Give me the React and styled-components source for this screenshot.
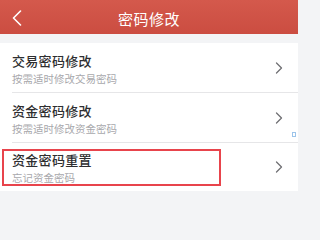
import React from "react";
import styled, { createGlobalStyle } from "styled-components";

const Global = createGlobalStyle`
  html, body { margin: 0; padding: 0; background: #f3f4f6; }
  body { font-family: "Noto Sans CJK SC", "Noto Sans", sans-serif; }
`;

const Page = styled.div`
  width: 298px;
  height: 210px;
  background: #f3f4f6;
  overflow: hidden;
`;

const Header = styled.div`
  height: 34px;
  background: linear-gradient(#d4594c, #cb4d41);
  display: grid;
  grid-template-columns: 40px 1fr 40px;
  align-items: center;
`;

const BackButton = styled.div`
  display: flex;
  align-items: center;
  padding-left: 12px;
  height: 100%;
`;

const Title = styled.div`
  text-align: center;
  color: #fff;
  font-size: 15px;
  letter-spacing: 0.5px;
  line-height: 34px;
  padding-top: 2px;
`;

const List = styled.div`
  margin-top: 9px;
  background: #fff;
`;

const Row = styled.div`
  position: relative;
  height: ${(p) => p.$h}px;
  padding-left: 12px;
  display: flex;
`;

const RowInner = styled.div`
  flex: 1;
  display: flex;
  align-items: center;
  border-bottom: ${(p) => (p.$last ? "none" : "1px solid #e6e6e8")};
  padding-right: 15px;
`;

const Texts = styled.div`
  flex: 1;
  display: flex;
  flex-direction: column;
  padding-top: 3px;
`;

const ItemTitle = styled.div`
  font-size: 13px;
  line-height: 16px;
  color: #2e2e30;
  font-weight: 500;
  letter-spacing: 0.3px;
`;

const ItemSub = styled.div`
  font-size: 10.5px;
  line-height: 14px;
  margin-top: 3px;
  color: #a8a8ac;
`;

const Highlight = styled.div`
  position: absolute;
  left: 2px;
  top: 6px;
  width: 215px;
  height: 33px;
  border: 2px solid #e8444c;
  pointer-events: none;
`;

const Mark = styled.div`
  position: absolute;
  right: 2px;
  bottom: 6px;
  width: 2px;
  height: 3px;
  border: 1px solid #9cc4ea;
`;

const Chevron = () => (
  <svg width="8" height="12" viewBox="0 0 8 12">
    <path d="M1.5 1 L6.5 6 L1.5 11" fill="none" stroke="#707074" strokeWidth="1.3" strokeLinecap="round" strokeLinejoin="round" />
  </svg>
);

const BackIcon = () => (
  <svg width="10" height="16" viewBox="0 0 10 16">
    <path d="M8.5 1 L1.5 8 L8.5 15" fill="none" stroke="#fff" strokeWidth="1.6" strokeLinecap="round" strokeLinejoin="round" />
  </svg>
);

const items = [
  { title: "交易密码修改", sub: "按需适时修改交易密码", h: 50 },
  { title: "资金密码修改", sub: "按需适时修改资金密码", h: 50, mark: true },
  { title: "资金密码重置", sub: "忘记资金密码", h: 48, last: true, highlight: true },
];

export default function App() {
  return (
    <Page>
      <Global />
      <Header>
        <BackButton>
          <BackIcon />
        </BackButton>
        <Title>密码修改</Title>
        <div />
      </Header>
      <List>
        {items.map((it) => (
          <Row key={it.title} $h={it.h}>
            <RowInner $last={it.last}>
              <Texts>
                <ItemTitle>{it.title}</ItemTitle>
                <ItemSub>{it.sub}</ItemSub>
              </Texts>
              <Chevron />
            </RowInner>
            {it.highlight && <Highlight />}
            {it.mark && <Mark />}
          </Row>
        ))}
      </List>
    </Page>
  );
}
